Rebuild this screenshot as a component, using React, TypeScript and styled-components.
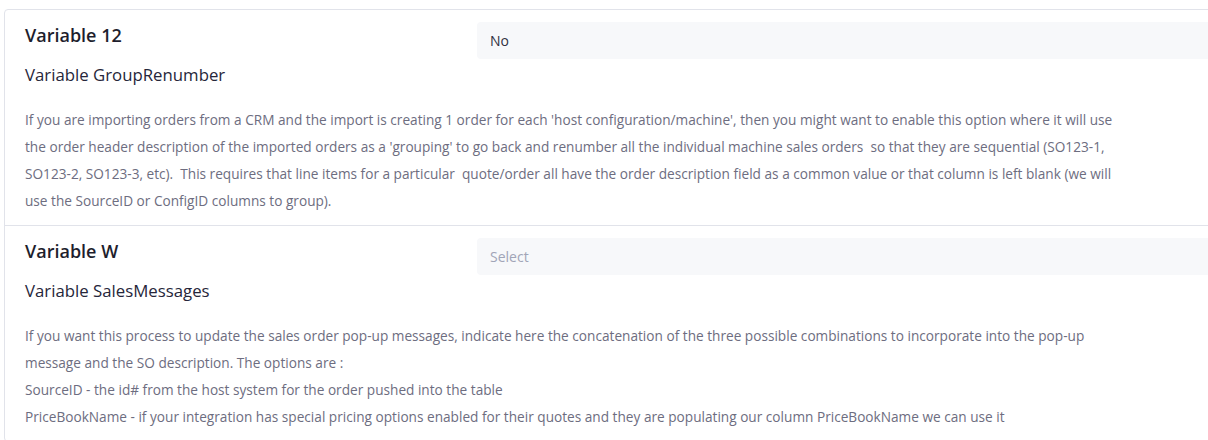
import React from 'react';
import styled, { createGlobalStyle } from 'styled-components';

const GlobalStyle = createGlobalStyle`
  html, body {
    margin: 0;
    padding: 0;
    background: #ffffff;
    overflow: hidden;
  }
  body {
    font-family: "Open Sans", "Noto Sans", sans-serif;
  }
`;

const Page = styled.div`
  width: 1208px;
  height: 440px;
  overflow: hidden;
  padding: 9px 0 0 4px;
  box-sizing: border-box;
`;

const Card = styled.div`
  width: 1260px;
  border: 1px solid #e1e3ea;
  border-radius: 4px;
  background: #ffffff;
`;

const Item = styled.div<{ first?: boolean }>`
  padding: 12px 0 11px 20px;
  border-top: ${(p) => (p.first ? 'none' : '1px solid #e1e3ea')};
`;

const Header = styled.div`
  display: grid;
  grid-template-columns: 452px 1fr;
  align-items: start;
`;

const Labels = styled.div`
  display: flex;
  flex-direction: column;
`;

const Title = styled.div`
  font-size: 18px;
  line-height: 26px;
  font-weight: 600;
  color: #1e1e2d;
`;

const Subtitle = styled.div`
  margin-top: 15px;
  font-size: 16.8px;
  line-height: 24px;
  color: #26263a;
`;

const Field = styled.div<{ placeholder?: boolean }>`
  height: 37px;
  display: flex;
  align-items: center;
  padding-left: 13px;
  background: #f7f8fa;
  border-radius: 4px;
  font-size: 14px;
  color: ${(p) => (p.placeholder ? '#a1a5b7' : '#303040')};
`;

const Paragraph = styled.div`
  margin-top: 19px;
  font-size: 13.65px;
  line-height: 27px;
  color: #6d6d80;
`;

const Line = styled.div`
  white-space: pre;
`;

type Variable = {
  title: string;
  name: string;
  value: string;
  placeholder?: boolean;
  lines: string[];
};

const variables: Variable[] = [
  {
    title: 'Variable 12',
    name: 'Variable GroupRenumber',
    value: 'No',
    lines: [
      "If you are importing orders from a CRM and the import is creating 1 order for each 'host configuration/machine', then you might want to enable this option where it will use",
      "the order header description of the imported orders as a 'grouping' to go back and renumber all the individual machine sales orders  so that they are sequential (SO123-1,",
      'SO123-2, SO123-3, etc).  This requires that line items for a particular  quote/order all have the order description field as a common value or that column is left blank (we will',
      'use the SourceID or ConfigID columns to group).',
    ],
  },
  {
    title: 'Variable W',
    name: 'Variable SalesMessages',
    value: 'Select',
    placeholder: true,
    lines: [
      'If you want this process to update the sales order pop-up messages, indicate here the concatenation of the three possible combinations to incorporate into the pop-up',
      'message and the SO description. The options are :',
      'SourceID - the id# from the host system for the order pushed into the table',
      'PriceBookName - if your integration has special pricing options enabled for their quotes and they are populating our column PriceBookName we can use it',
    ],
  },
];

const App = () => {
  return (
    <>
      <GlobalStyle />
      <Page>
        <Card>
          {variables.map((v, i) => (
            <Item key={v.title} first={i === 0}>
              <Header>
                <Labels>
                  <Title>{v.title}</Title>
                  <Subtitle>{v.name}</Subtitle>
                </Labels>
                <Field placeholder={v.placeholder}>{v.value}</Field>
              </Header>
              <Paragraph>
                {v.lines.map((l, j) => (
                  <Line key={j}>{l}</Line>
                ))}
              </Paragraph>
            </Item>
          ))}
        </Card>
      </Page>
    </>
  );
};

export default App;
